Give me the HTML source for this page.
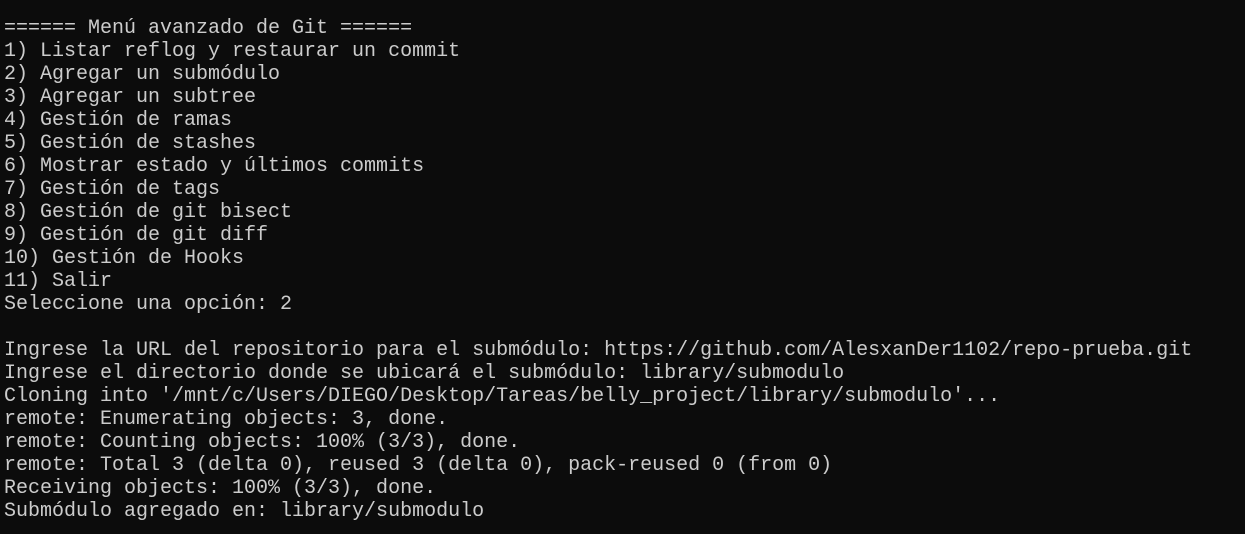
<!DOCTYPE html>
<html><head><meta charset="utf-8"><style>
html,body{margin:0;padding:0;background:#0c0c0c;width:1245px;height:534px;overflow:hidden}
pre{margin:0;position:absolute;left:4px;top:17px;font-family:"Liberation Mono",monospace;font-size:20px;line-height:23px;color:#cccccc;white-space:pre}
</style></head><body><pre>====== Menú avanzado de Git ======
1) Listar reflog y restaurar un commit
2) Agregar un submódulo
3) Agregar un subtree
4) Gestión de ramas
5) Gestión de stashes
6) Mostrar estado y últimos commits
7) Gestión de tags
8) Gestión de git bisect
9) Gestión de git diff
10) Gestión de Hooks
11) Salir
Seleccione una opción: 2

Ingrese la URL del repositorio para el submódulo: https://github.com/AlesxanDer1102/repo-prueba.git
Ingrese el directorio donde se ubicará el submódulo: library/submodulo
Cloning into '/mnt/c/Users/DIEGO/Desktop/Tareas/belly_project/library/submodulo'...
remote: Enumerating objects: 3, done.
remote: Counting objects: 100% (3/3), done.
remote: Total 3 (delta 0), reused 3 (delta 0), pack-reused 0 (from 0)
Receiving objects: 100% (3/3), done.
Submódulo agregado en: library/submodulo</pre></body></html>
